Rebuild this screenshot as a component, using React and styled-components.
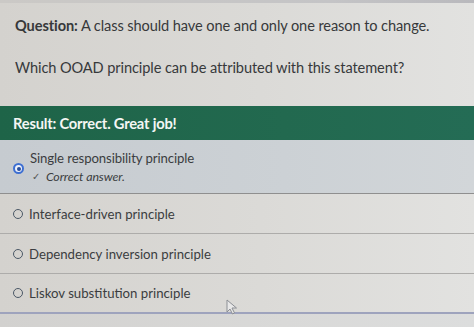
import React from "react";
import styled, { createGlobalStyle } from "styled-components";

const Global = createGlobalStyle`
  html, body { margin: 0; padding: 0; }
  body {
    width: 474px; height: 327px; overflow: hidden;
    font-family: Lato, "Open Sans", sans-serif;
    background: #d6d4d0;
  }
`;

const Page = styled.div`
  width: 474px;
  height: 327px;
  display: flex;
  flex-direction: column;
  background: linear-gradient(90deg, #d4d2ce 0%, #dbdad7 55%, #e2e2e0 100%);
  color: #37393b;
`;

const TopStrip = styled.div`
  height: 3px;
  background: linear-gradient(90deg, #cbc9c6, #c4c4c6 70%, #b9b9bd);
`;

const Question = styled.div`
  padding: 14px 15px 0 15px;
  height: 103px;
  box-sizing: border-box;
  font-size: 14.6px;
  line-height: 18px;
`;

const Para = styled.p`
  margin: 0 0 ${(p) => p.$gap || 0}px 0;
  letter-spacing: -0.1px;
`;

const ResultBar = styled.div`
  height: 34px;
  display: flex;
  align-items: center;
  padding: 0 13px;
  background: linear-gradient(90deg, #1e6448, #22694f 60%, #246c55);
  color: #f4f6f4;
  font-weight: 700;
  font-size: 14.7px;
  letter-spacing: -0.2px;
`;

const Answer = styled.div`
  display: flex;
  align-items: center;
  gap: 6px;
  height: ${(p) => p.$h}px;
  box-sizing: border-box;
  padding: 0 0 0 13px;
  background: ${(p) =>
    p.$selected
      ? "linear-gradient(90deg, #c6cbd0, #ccd1d5 60%, #d2d6d9)"
      : "transparent"};
  border-bottom: ${(p) => p.$bw || 1}px solid ${(p) => p.$bc || "#adacaa"};
  font-size: 13.2px;
  color: #3b3d40;
`;

const Radio = styled.span`
  flex: none;
  box-sizing: border-box;
  width: ${(p) => (p.$selected ? 11 : 10)}px;
  height: ${(p) => (p.$selected ? 11 : 10)}px;
  border-radius: 50%;
  border: ${(p) => (p.$selected ? "2px solid #3d6fd2" : "1.5px solid #4b5866")};
  background: ${(p) => (p.$selected ? "#eef2fb" : "transparent")};
  display: flex;
  align-items: center;
  justify-content: center;
  margin-top: ${(p) => (p.$selected ? 4 : 0)}px;
  &::after {
    content: "";
    display: ${(p) => (p.$selected ? "block" : "none")};
    width: 4px;
    height: 4px;
    border-radius: 50%;
    background: #2a4f9a;
  }
`;

const Label = styled.div`
  display: flex;
  flex-direction: column;
  gap: 3px;
  letter-spacing: -0.1px;
`;

const Feedback = styled.div`
  font-style: italic;
  font-size: 12.4px;
  display: flex;
  align-items: center;
  gap: 6px;
  padding-left: 2px;
`;

const Check = styled.span`
  font-style: normal;
  font-size: 10px;
  color: #555;
`;

const Cursor = styled.svg`
  position: absolute;
  left: 226px;
  top: 299px;
`;

const Footer = styled.div`
  flex: 1;
  background: linear-gradient(90deg, #d2d1cf, #d9d9d8 60%, #dcdddd);
`;

const Wrap = styled.div`
  position: relative;
`;

export default function App() {
  const others = [
    { t: "Interface-driven principle", h: 40 },
    { t: "Dependency inversion principle", h: 40 },
    { t: "Liskov substitution principle", h: 40, bw: 2, bc: "#9ea3bd" },
  ];
  return (
    <Wrap>
      <Global />
      <Page>
        <TopStrip />
        <Question>
          <Para $gap={24}>
            <b>Question:</b> A class should have one and only one reason to change.
          </Para>
          <Para>Which OOAD principle can be attributed with this statement?</Para>
        </Question>
        <ResultBar>Result: Correct. Great job!</ResultBar>
        <Answer $selected $h={54} $bc="#8f8f8f">
          <Radio $selected />
          <Label>
            <span>Single responsibility principle</span>
            <Feedback>
              <Check>✓</Check>
              Correct answer.
            </Feedback>
          </Label>
        </Answer>
        {others.map((o) => (
          <Answer key={o.t} $h={o.h} $bw={o.bw} $bc={o.bc}>
            <Radio />
            <span>{o.t}</span>
          </Answer>
        ))}
        <Footer />
      </Page>
      <Cursor width="12" height="16" viewBox="0 0 12 16">
        <path d="M1 1 L1 13 L4 10 L6.5 15 L8.5 14 L6 9 L10.5 9 Z" fill="#e8e8e8" stroke="#8c8f95" strokeWidth="1" />
      </Cursor>
    </Wrap>
  );
}
